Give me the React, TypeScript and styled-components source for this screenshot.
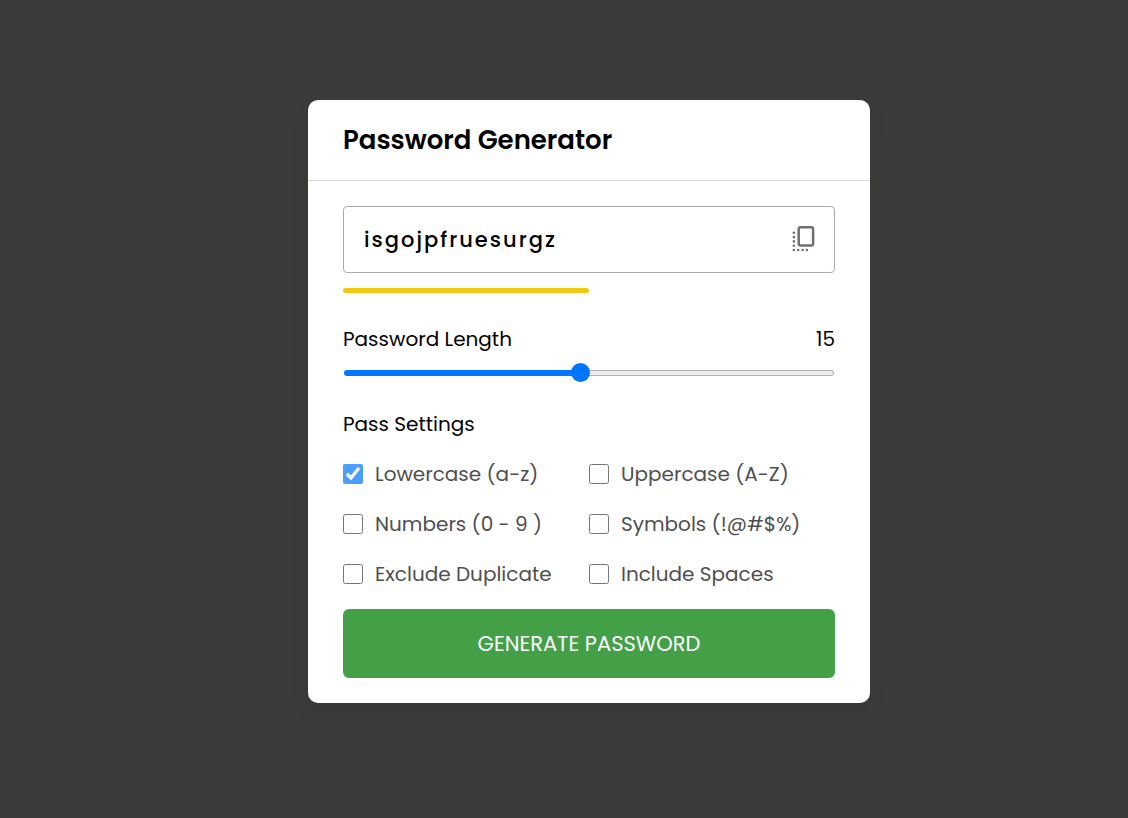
import React, { useState } from "react";
import styled, { createGlobalStyle } from "styled-components";

const GlobalStyle = createGlobalStyle`
  * {
    box-sizing: border-box;
    margin: 0;
    padding: 0;
    font-family: Poppins, Inter, sans-serif;
  }
  body {
    background: #3b3b39;
    color: #000;
  }
`;

const Page = styled.main`
  display: flex;
  justify-content: center;
  align-items: flex-start;
  min-height: 100vh;
  padding: 100px 0 100px 50px;
`;

const Card = styled.section`
  width: 100%;
  max-width: 562px;
  background: #fff;
  border-radius: 10px;
  box-shadow: 0 10px 20px rgba(0, 0, 0, 0.06);
`;

const Title = styled.h1`
  padding: 20px 35px;
  border-bottom: 1px solid #d4dbe5;
  font-size: 26px;
  font-weight: 600;
  line-height: 40px;
`;

const Content = styled.form`
  display: flex;
  flex-direction: column;
  padding: 25px 35px;
`;

const PasswordBox = styled.div`
  display: flex;
  align-items: center;
  gap: 12px;
  height: 67px;
  padding: 0 18px 0 20px;
  border: 1px solid #aaa;
  border-radius: 4px;
`;

const PasswordInput = styled.input`
  flex: 1;
  min-width: 0;
  height: 100%;
  border: none;
  outline: none;
  background: none;
  color: #000;
  font-size: 21px;
  font-weight: 500;
  letter-spacing: 2px;
`;

const CopyButton = styled.button`
  display: flex;
  border: none;
  background: none;
  color: #707070;
  cursor: pointer;
`;

const Strength = styled.div`
  width: 50%;
  height: 5px;
  margin-top: 15px;
  border-radius: 3px;
  background: #f1c80b;
`;

const LengthRow = styled.div`
  display: flex;
  justify-content: space-between;
  margin: 31px 0 9px;
  font-size: 20px;
  line-height: 30px;
`;

const Slider = styled.input<{ $fill: number }>`
  appearance: none;
  display: block;
  width: 100%;
  height: 20px;
  background: none;

  &::-webkit-slider-runnable-track {
    height: 6px;
    margin: 0 1px;
    border: 1px solid transparent;
    border-radius: 3px;
    background:
      linear-gradient(#0075ff, #0075ff) left / ${(p) => p.$fill}% 100% no-repeat border-box,
      linear-gradient(#efefef, #efefef) padding-box,
      linear-gradient(#b2b2b2, #b2b2b2) border-box;
  }

  &::-webkit-slider-thumb {
    appearance: none;
    width: 19px;
    height: 19px;
    margin-top: -8px;
    border-radius: 50%;
    background: #0075ff;
  }
`;

const Settings = styled.fieldset`
  margin-top: 26px;
  border: none;
`;

const Legend = styled.legend`
  margin-bottom: 20px;
  font-size: 20px;
  line-height: 30px;
`;

const Options = styled.div`
  display: grid;
  grid-template-columns: 1fr 1fr;
  row-gap: 20px;
`;

const Option = styled.label`
  display: flex;
  align-items: center;
  gap: 12px;
  color: #4f4f4f;
  font-size: 20px;
  line-height: 30px;
  white-space: nowrap;
`;

const Check = styled.input`
  width: 20px;
  height: 20px;

  &:checked {
    opacity: 0.7;
  }
`;

const Generate = styled.button`
  height: 69px;
  margin-top: 20px;
  border: none;
  border-radius: 6px;
  background: #43a047;
  color: #fff;
  font-size: 21px;
  text-transform: uppercase;
  cursor: pointer;
`;

const CopyIcon = () => (
  <svg width="24" height="28" viewBox="0 0 24 28" fill="none" aria-hidden="true">
    <rect x="6.7" y="1.2" width="14.4" height="18.3" rx="1.8" stroke="currentColor" strokeWidth="2.5" />
    <g fill="currentColor">
      {[6.8, 11.1, 15.4, 19.7, 24].map((y) => (
        <circle key={y} cx="1.9" cy={y} r="1.3" />
      ))}
      {[6.2, 10.6, 14.9].map((x) => (
        <circle key={x} cx={x} cy="24" r="1.3" />
      ))}
    </g>
  </svg>
);

const options = [
  "Lowercase (a-z)",
  "Uppercase (A-Z)",
  "Numbers (0 - 9 )",
  "Symbols (!@#$%)",
  "Exclude Duplicate",
  "Include Spaces",
];

export default function App() {
  const [length, setLength] = useState(15);

  return (
    <>
      <GlobalStyle />
      <Page>
        <Card>
          <Title>Password Generator</Title>
          <Content onSubmit={(e) => e.preventDefault()}>
            <PasswordBox>
              <PasswordInput type="text" aria-label="Generated password" value="isgojpfruesurgz" readOnly />
              <CopyButton type="button" aria-label="Copy password">
                <CopyIcon />
              </CopyButton>
            </PasswordBox>
            <Strength />
            <LengthRow>
              <label htmlFor="length">Password Length</label>
              <output htmlFor="length">{length}</output>
            </LengthRow>
            <Slider
              id="length"
              type="range"
              min={1}
              max={30}
              value={length}
              $fill={((length - 1) / 29) * 100}
              onChange={(e) => setLength(Number(e.target.value))}
            />
            <Settings>
              <Legend>Pass Settings</Legend>
              <Options>
                {options.map((text, i) => (
                  <Option key={text}>
                    <Check type="checkbox" defaultChecked={i === 0} />
                    {text}
                  </Option>
                ))}
              </Options>
            </Settings>
            <Generate type="submit">Generate Password</Generate>
          </Content>
        </Card>
      </Page>
    </>
  );
}
